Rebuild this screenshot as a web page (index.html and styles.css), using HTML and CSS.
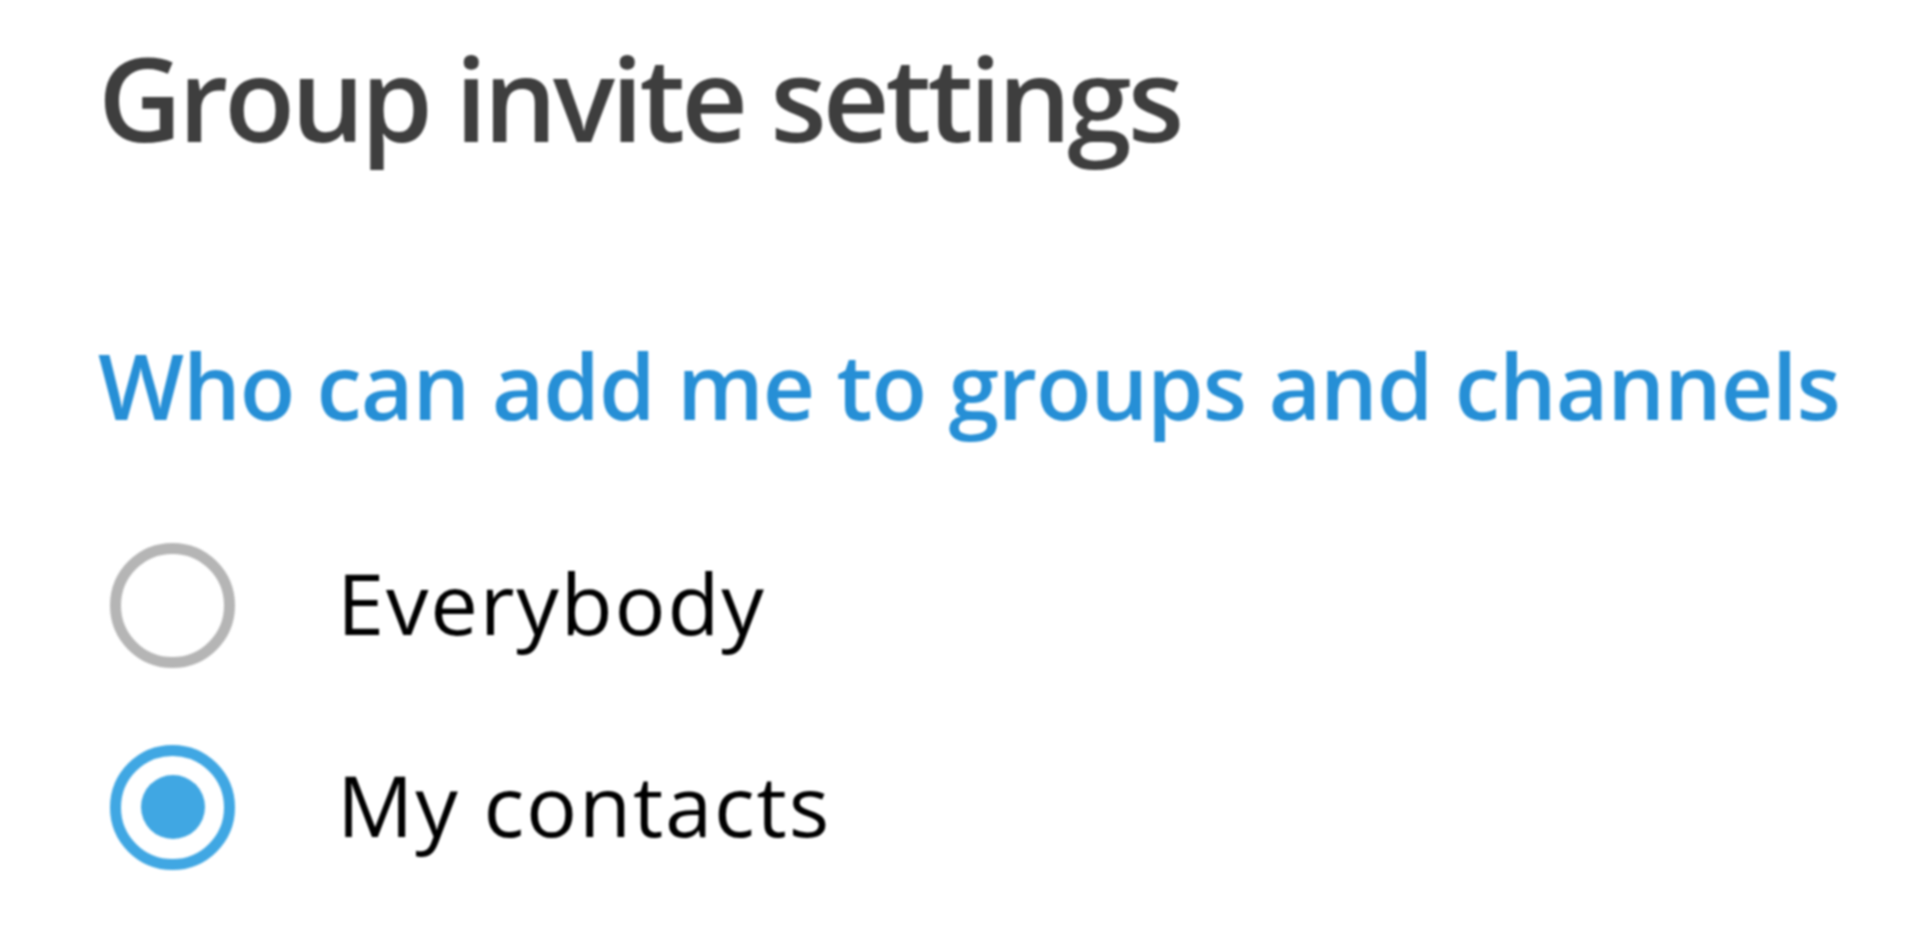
FILE: index.html
```html
<!DOCTYPE html>
<html lang="en">
<head>
<meta charset="utf-8">
<title>Group invite settings</title>
<link rel="stylesheet" href="styles.css">
</head>
<body>
<main class="panel">
  <h1 class="title">Group invite settings</h1>
  <h2 class="section">Who can add me to groups and channels</h2>
  <div class="options">
    <label class="option">
      <span class="radio"></span>
      <span class="label">Everybody</span>
    </label>
    <label class="option">
      <span class="radio checked"></span>
      <span class="label">My contacts</span>
    </label>
  </div>
</main>
</body>
</html>
```

FILE: styles.css
```css
html, body {
  margin: 0;
  padding: 0;
  background: #ffffff;
}

body {
  font-family: "Open Sans", "Noto Sans", sans-serif;
  width: 1920px;
  height: 941px;
  overflow: hidden;
}

.panel {
  display: flex;
  flex-direction: column;
  padding: 27px 0 0 98px;
  filter: blur(0.8px);
}

.title {
  margin: 0;
  font-size: 116px;
  line-height: 140px;
  font-weight: 600;
  letter-spacing: -4px;
  color: #3e3e3e;
}

.section {
  margin: 164px 0 0 0;
  font-size: 91px;
  line-height: 109px;
  font-weight: 600;
  letter-spacing: -1.1px;
  color: #268fd6;
}

.options {
  display: flex;
  flex-direction: column;
  margin-top: 64px;
}

.option {
  display: flex;
  align-items: center;
  height: 202px;
}

.radio {
  box-sizing: border-box;
  width: 125px;
  height: 125px;
  margin-left: 12px;
  border: 11px solid #b5b5b5;
  border-radius: 50%;
  display: flex;
  align-items: center;
  justify-content: center;
  flex: none;
}

.radio.checked {
  border-color: #40a7e3;
}

.radio.checked::after {
  content: "";
  width: 64px;
  height: 64px;
  border-radius: 50%;
  background: #40a7e3;
}

.label {
  margin-left: 102px;
  font-size: 85px;
  line-height: 116px;
  padding-bottom: 6px;
  font-weight: 450;
  letter-spacing: 1.8px;
  color: #000000;
}
```
